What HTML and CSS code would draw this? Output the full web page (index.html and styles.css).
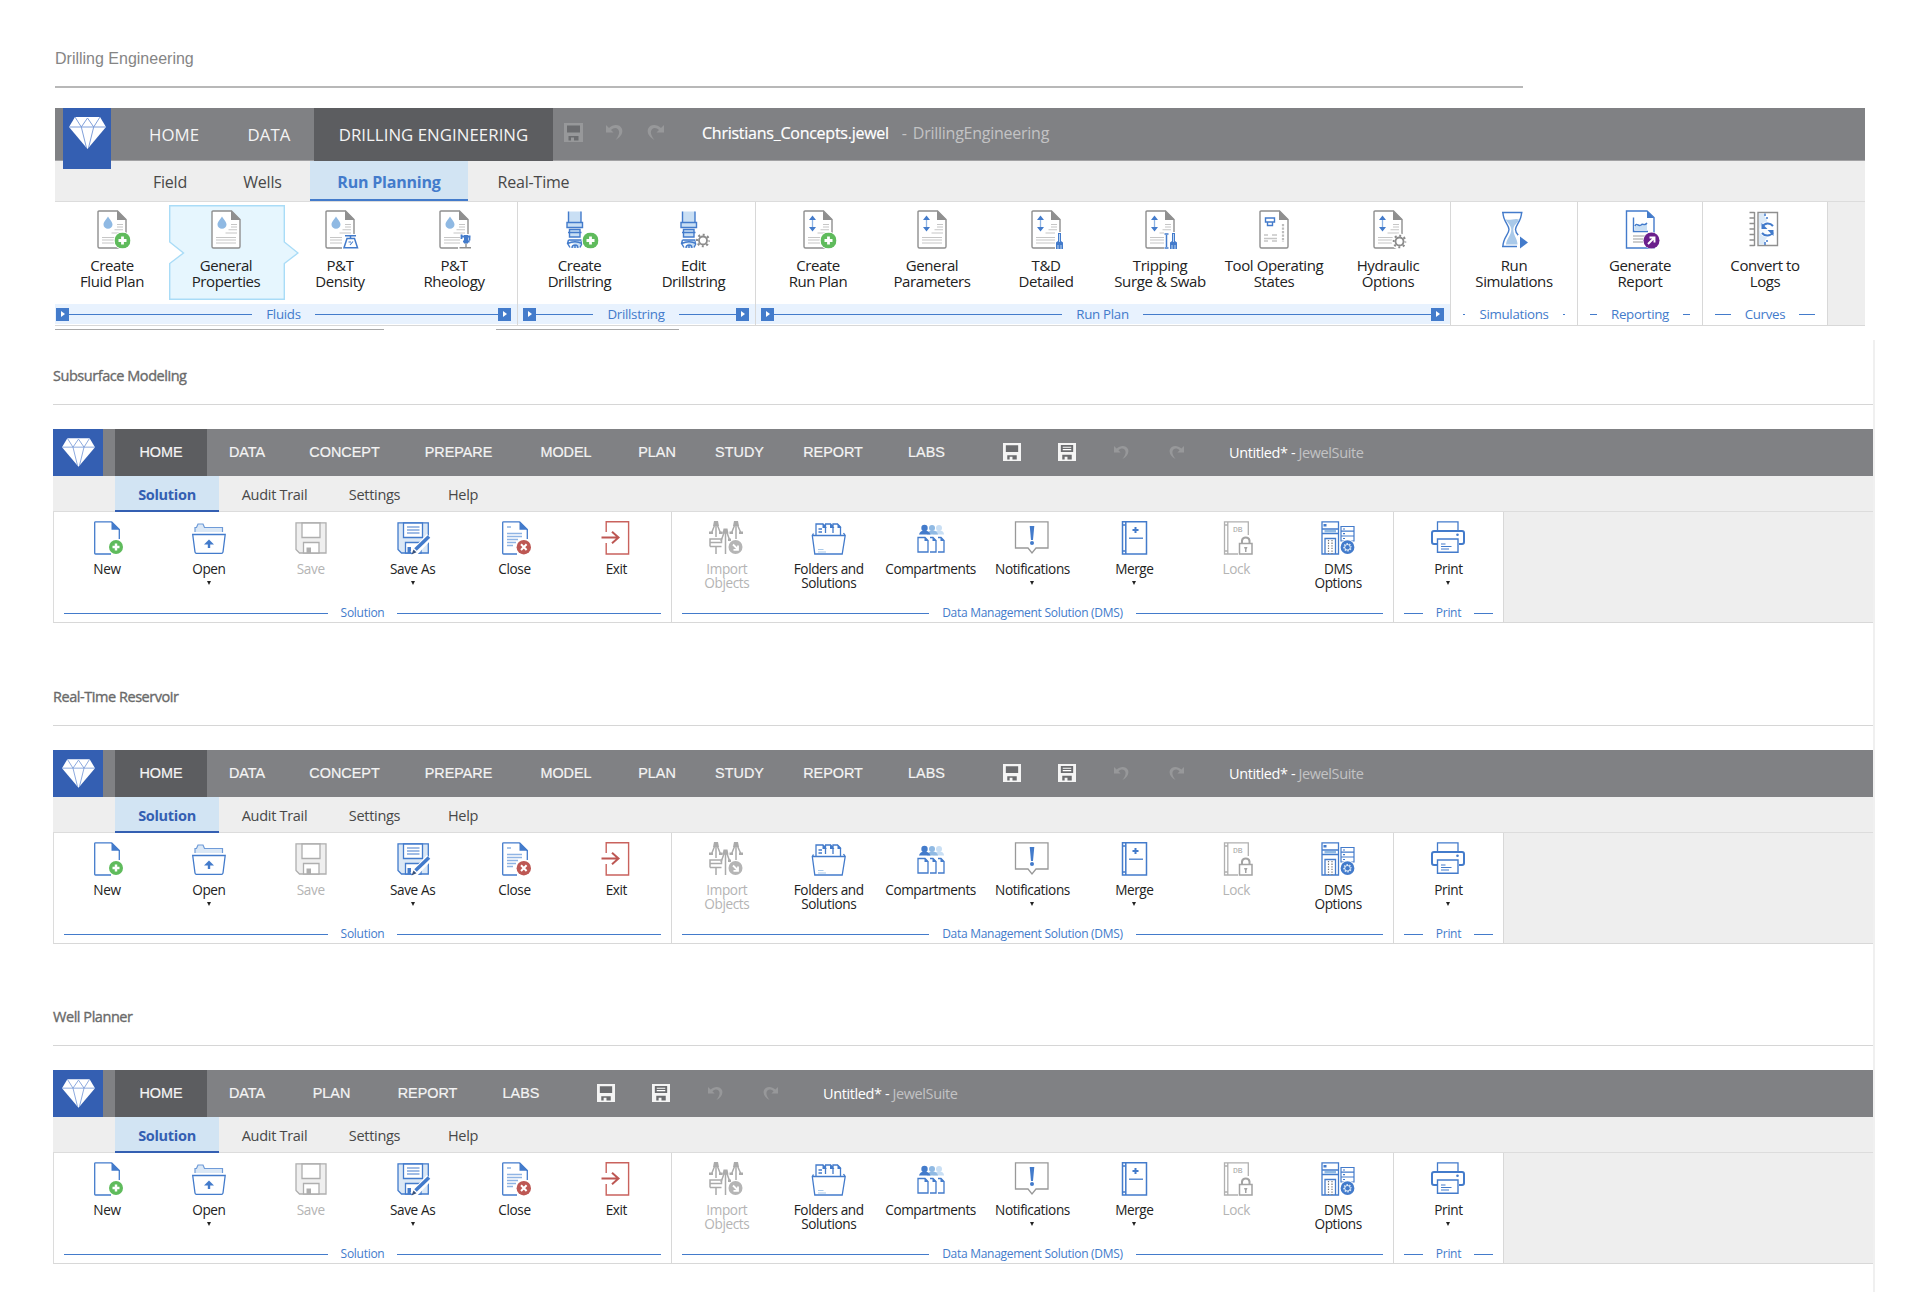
FILE: index.html
```
<!DOCTYPE html>
<html lang="en">
<head>
    <meta charset="UTF-8">
    <title>JewelSuite Ribbons</title>
    <link rel="stylesheet" href="styles.css">
</head>
<body>

    <!-- Icon sprite -->
    <svg class="sprite" aria-hidden="true">
        <symbol id="diamond" viewBox="0 0 37 32">
            <path d="M6 0H31L37 10L18.5 32L0 10Z" fill="#fff"/>
            <path d="M0 10H37M6 0L12.3 10L18.5 1L24.7 10L31 0M12.3 10L17.5 31M24.7 10L19.5 31" fill="none" stroke="#7f9fda" stroke-width="1"/>
        </symbol>
        <symbol id="plus" viewBox="0 0 16 16">
            <circle cx="8" cy="8" r="8" fill="#5fbb5c"/>
            <path d="M8 4V12M4 8H12" stroke="#fff" stroke-width="2.8"/>
        </symbol>
        <symbol id="gear" viewBox="0 0 14 14">
            <circle cx="7" cy="7" r="4" fill="#fff" stroke="#8c8c8c" stroke-width="1.8"/>
            <circle cx="7" cy="7" r="5.9" fill="none" stroke="#8c8c8c" stroke-width="2.2" stroke-dasharray="2 2.63" stroke-dashoffset="1"/>
        </symbol>

        <!-- quick access -->
        <symbol id="q-save" viewBox="0 0 19 19">
            <path d="M0 0H19V19H0Z" fill="currentColor"/>
            <path class="hole" d="M3 2.5H16V9.5H3ZM4.5 13H14.5V17.5H10V14.5H7V17.5H4.5Z"/>
        </symbol>
        <symbol id="q-saveall" viewBox="0 0 19 19">
            <path d="M0 0H19V19H0Z" fill="currentColor"/>
            <path class="hole" d="M3 2H16V9.5H3ZM4.5 12.5H14.5V17.5H10V14.5H7V17.5H4.5Z"/>
            <path d="M5 4.5H14M5 7H14" stroke="#fff" stroke-width="1.2"/>
        </symbol>
        <symbol id="q-undo" viewBox="0 0 17 17">
            <path d="M0 1V8.5H7.5L5 6C7 4 10 3.2 12 5.2C14.3 7.7 13 11.5 9.5 16C15 13 17.5 8.5 15.8 4.5C13.7 0 7 0 3 4Z" fill="currentColor"/>
        </symbol>
        <symbol id="q-redo" viewBox="0 0 17 17">
            <path d="M17 1V8.5H9.5L12 6C10 4 7 3.2 5 5.2C2.7 7.7 4 11.5 7.5 16C2 13 -.5 8.5 1.2 4.5C3.3 0 10 0 14 4Z" fill="currentColor"/>
        </symbol>

        <!-- drilling engineering -->
        <symbol id="page" viewBox="0 0 44 39">
            <path d="M9 1H27.5L36 9.5V36.5Q36 38 34.5 38H9.5Q8 38 8 36.5V2Q8 1 9 1Z" fill="#fff" stroke="#8f8f8f" stroke-width="1.4"/>
            <path d="M27 .5L36.5 10H27Z" fill="#8f8f8f"/>
        </symbol>
        <symbol id="page-lines" viewBox="0 0 44 39">
            <path d="M27 14.5H33M27 17H33M24.5 19.7H33M21.5 23H33M12 27.5H32M12 30H32M12 33H32" stroke="#c6c6c6" stroke-width="1.1"/>
        </symbol>
        <symbol id="page-fluid" viewBox="0 0 44 39">
            <use href="#page"/><use href="#page-lines"/>
            <path d="M18 6.5C19.5 9.5 22.5 11.5 22.5 14.5A4.5 4.3 0 0 1 13.5 14.5C13.5 11.5 16.5 9.5 18 6.5Z" fill="#8fb9e3"/>
        </symbol>
        <symbol id="page-range" viewBox="0 0 44 39">
            <use href="#page"/><use href="#page-lines"/>
            <path d="M16.5 9V18" stroke="#8fb4e4" stroke-width="1.3"/>
            <path d="M16.5 5.5L20 10H13ZM16.5 21.5L20 17H13Z" fill="#437bcb"/>
        </symbol>
        <symbol id="d-fluidplan" viewBox="0 0 44 39">
            <use href="#page-fluid"/>
            <circle cx="32.5" cy="30.5" r="9" fill="#fff"/>
            <use href="#plus" x="24.5" y="22.5" width="16" height="16"/>
        </symbol>
        <symbol id="d-density" viewBox="0 0 44 39">
            <use href="#page-fluid"/>
            <path d="M24 24H43V39H24Z" fill="#fff"/>
            <path d="M27 25.7H38M32.5 26V28M29 28.5H36.5L39.5 37.7H26Z" fill="none" stroke="#437bcb" stroke-width="1.5"/>
            <path d="M30.5 32H33M32 35L35 31.5" stroke="#437bcb" stroke-width="1.1"/>
        </symbol>
        <symbol id="d-rheology" viewBox="0 0 44 39">
            <use href="#page-fluid"/>
            <path d="M28 24H43V39H26V34H28Z" fill="#fff"/>
            <path d="M29.5 24.5V29M29 26.5H38.5M37.5 27V30.5M31 31.5H37.5" fill="none" stroke="#437bcb" stroke-width="1.8"/>
            <path d="M34 25V33.5" stroke="#437bcb" stroke-width="4"/>
            <path d="M27.500 37.700H39M34 33.500V37.500" stroke="#8f8f8f" stroke-width="1.4"/>
        </symbol>
        <symbol id="drill" viewBox="0 0 44 39">
            <g fill="#c9dff4" stroke="#437bcb" stroke-width="1.4">
                <path d="M10.5 1.500V13H23V1.500" />
                <path d="M9 12.500H24.500V17.500H9Z"/>
                <path d="M11.500 19.500H22V27H11.500ZM10 22.500H23.500"/>
                <path d="M10.500 30H23L24 33.500L22 37.500M10.500 30L9.500 33.500L12 37.500M9.500 33.500C14 31.500 20 31.500 24 33.500M14 38C14 34 20 34 20 38M17 35V38"/>
            </g>
        </symbol>
        <symbol id="d-createstring" viewBox="0 0 44 39">
            <use href="#drill"/>
            <circle cx="32.5" cy="30.5" r="9" fill="#fff"/>
            <use href="#plus" x="24.5" y="22.5" width="16" height="16"/>
        </symbol>
        <symbol id="d-editstring" viewBox="0 0 44 39">
            <use href="#drill"/>
            <circle cx="31" cy="30.5" r="7.5" fill="#fff"/>
            <use href="#gear" x="24" y="23.5" width="14" height="14"/>
        </symbol>
        <symbol id="d-runplan" viewBox="0 0 44 39">
            <use href="#page-range"/>
            <circle cx="32.5" cy="30.5" r="9" fill="#fff"/>
            <use href="#plus" x="24.5" y="22.5" width="16" height="16"/>
        </symbol>
        <symbol id="bit" viewBox="0 0 8 16">
            <path d="M2.5 0H5.5V8L7.5 9.500V16H.5V9.500L2.5 8Z" fill="#437bcb"/>
            <path d="M4 1V9M2.5 12V16M5.5 12V16" stroke="#c9dff4" stroke-width=".9"/>
        </symbol>
        <symbol id="d-td" viewBox="0 0 44 39">
            <use href="#page-range"/>
            <path d="M31 22H42V39H31Z" fill="#fff"/>
            <use href="#bit" x="31.5" y="23" width="8" height="16"/>
        </symbol>
        <symbol id="d-tripping" viewBox="0 0 44 39">
            <use href="#page-range"/>
            <path d="M26 22H42V39H26Z" fill="#fff"/>
            <path d="M28.5 25V37M26.5 24H30.5M26.5 38H30.5" stroke="#437bcb" stroke-width="1.5"/>
            <use href="#bit" x="31.5" y="23" width="8" height="16"/>
        </symbol>
        <symbol id="d-tool" viewBox="0 0 44 39">
            <use href="#page"/>
            <path d="M13.5 8H22.5V12H20.5V15.5H15.5V12H13.5ZM15.5 12H20.5" fill="#fff" stroke="#437bcb" stroke-width="1.4"/>
            <path d="M31 14V32" stroke="#bdbdbd" stroke-width="2.2" stroke-dasharray="2.2 1.3"/>
            <path d="M12 25H16M20 25H25M12 28.5H25M12 31H16M20 31H25" stroke="#c6c6c6" stroke-width="1.4"/>
        </symbol>
        <symbol id="d-hydraulic" viewBox="0 0 44 39">
            <use href="#page-range"/>
            <circle cx="33.5" cy="31.5" r="8" fill="#fff"/>
            <use href="#gear" x="26.5" y="24.5" width="14" height="14"/>
        </symbol>
        <symbol id="d-simulate" viewBox="0 0 44 39">
            <path d="M10 2.5H30.5M10 36.5H25" stroke="#437bcb" stroke-width="1.6"/>
            <path d="M11 3C11 11 17 15 17 19.5C17 24 11 28 11 36M29.5 3C29.5 11 23.500 15 23.500 19.5C23.500 22 24.500 23.500 26.500 25.500" fill="#fff" stroke="#437bcb" stroke-width="1.4"/>
            <path d="M13.500 9C17 11.500 23 7.500 27 9.500C26 13 21.300 15 21.300 19.500C21.300 25 25.500 29 25.500 34.500H14C14.500 29 19.300 25 19.300 19.500C19.300 15 14.500 12 13.500 9Z" fill="#a9c9e9"/>
            <path d="M26 24.5L37 32.5L27 39H26Z" fill="#fff"/>
            <path d="M28 26.5L36 32.5L28 38.5Z" fill="#437bcb"/>
        </symbol>
        <symbol id="d-report" viewBox="0 0 44 39">
            <path d="M8.5 1H29L36 7.5V38H8.5Z" fill="#fff" stroke="#437bcb" stroke-width="1.4"/>
            <path d="M29 1V8H36Z" fill="#437bcb"/>
            <path d="M17 16L20 14L22 15.5L26 14L29 12.5V20H17Z" fill="#c9dff4"/>
            <path d="M15.5 7.5V21.5H30M17 16C19 12 20 17 23 15C25 12.5 26 17 29 13" fill="none" stroke="#437bcb" stroke-width="1.4"/>
            <path d="M15 26H27M15 29H27M15 32H27" stroke="#9b9b9b" stroke-width="1.2"/>
            <circle cx="33.5" cy="30.5" r="8.5" fill="#fff"/>
            <circle cx="33.5" cy="30.5" r="8" fill="#6b1f8c"/>
            <path d="M30 34L36 28M31.5 27.5H36.5V32.5" fill="none" stroke="#fff" stroke-width="1.9"/>
        </symbol>
        <symbol id="d-convert" viewBox="0 0 44 39">
            <path d="M11.5 2V36M6.5 2.5H11.5M6.5 8H11.5M6.5 13.5H11.5M6.5 19H11.5M6.5 24.5H11.5M6.5 30H11.5M6.5 35.5H11.5" stroke="#8f8f8f" stroke-width="1.4"/>
            <path d="M15 2.5H34.5V35.5H15Z" fill="#fff" stroke="#8f8f8f" stroke-width="1.4"/>
            <path d="M16 3.5H21Q22 8 24 10V28Q21 30 22 34.5H16Z" fill="#dbe9f7"/>
            <circle cx="24.5" cy="19.5" r="8" fill="#fff" opacity=".8"/>
            <path d="M22 3.5V6M24 7V9M24 30V32M22 32V35" stroke="#437bcb" stroke-width="1.5"/>
            <path d="M30 16C27 12.5 22 12.5 19.5 16.5M19 23C22 26.5 27 26.5 30 22.5" fill="none" stroke="#437bcb" stroke-width="2"/>
            <path d="M18.5 13V19H24.5ZM30.5 26V20H24.5Z" fill="#437bcb"/>
        </symbol>

        <!-- home ribbon -->
        <symbol id="s-new" viewBox="0 0 36 34">
            <path d="M22.5 .8H6.5Q5.7 .8 5.7 1.6V32.2Q5.7 33 6.5 33H22M30.3 18V8.5L22.5 .8" fill="none" stroke="#437bcb" stroke-width="1.3"/>
            <path d="M22.5 .5L31 8.8H22.5Z" fill="#437bcb"/>
            <use href="#plus" x="20" y="19" width="14" height="14"/>
        </symbol>
        <symbol id="s-open" viewBox="0 0 36 34">
            <path d="M4 11V6.5H5.5L7 3H12L13.5 6.5H31.5V11" fill="#dbe8f6" stroke="#6f9bd8" stroke-width="1.2"/>
            <path d="M1.7 13.5H34.2L32 31Q31.8 32.3 30.5 32.3H5.5Q4.2 32.3 4 31Z" fill="#fff" stroke="#437bcb" stroke-width="1.3"/>
            <path d="M18 27V21" stroke="#437bcb" stroke-width="2.4"/>
            <path d="M18 18.5L23 23.5H13Z" fill="#437bcb"/>
        </symbol>
        <symbol id="s-save" viewBox="0 0 36 34">
            <path d="M3 1.8H33V32H6.5L3 28.5Z" fill="#efefef" stroke="#aeaeae" stroke-width="1.3"/>
            <path d="M9 2H27V16.5H9ZM10.5 32V21.5H26V32Z" fill="#fff" stroke="#aeaeae" stroke-width="1.3"/>
            <path d="M13.5 26.5H18V32H13.5Z" fill="#aeaeae"/>
        </symbol>
        <symbol id="s-saveas" viewBox="0 0 36 34">
            <path d="M3 1.8H33.3V32H6.5L3 28.5Z" fill="#dbe8f6" stroke="#437bcb" stroke-width="1.3"/>
            <path d="M8.5 2H27.5V16.5H8.5ZM10.5 32V21.5H26V32Z" fill="#fff" stroke="#437bcb" stroke-width="1.3"/>
            <path d="M12 6H24.5M12 9H24.5M12 12H24.5" stroke="#437bcb" stroke-width="1.2"/>
            <path d="M12.5 26H16V32H12.5Z" fill="#437bcb"/>
            <path d="M18 33L34.5 15.5" stroke="#fff" stroke-width="7"/>
            <path d="M20.5 28.5L34 15.5" stroke="#437bcb" stroke-width="3.6"/>
            <path d="M16.5 33.5L18.5 28.5L21.5 31.3Z" fill="#36517d"/>
        </symbol>
        <symbol id="s-close" viewBox="0 0 36 34">
            <path d="M22.5 .8H6.5Q5.7 .8 5.7 1.6V32.2Q5.7 33 6.5 33H20M30.3 18V8.5L22.5 .8" fill="none" stroke="#437bcb" stroke-width="1.3"/>
            <path d="M22.5 .5L31 8.8H22.5Z" fill="#437bcb"/>
            <path d="M10 6H14M10 12.5H25M10 15.5H25M10 18.5H21M10 21.5H19M10 24.5H16" stroke="#8fb4e4" stroke-width="1.3"/>
            <circle cx="26.8" cy="26.2" r="7.2" fill="#bd5753"/>
            <path d="M24 23.3L29.6 29M29.6 23.3L24 29" stroke="#fff" stroke-width="2"/>
        </symbol>
        <symbol id="s-exit" viewBox="0 0 36 34">
            <path d="M8.2 11V.8H30.6V33H8.2V22" fill="none" stroke="#c9625d" stroke-width="1.4"/>
            <path d="M3.5 16.5H20M14 10.8L20.5 16.5L14 22.2" fill="none" stroke="#bd5753" stroke-width="2"/>
        </symbol>
        <symbol id="s-import" viewBox="0 0 36 34">
            <g fill="none" stroke="#ababab" stroke-width="1.5">
                <path d="M6.5 2L2.5 12M7.500 2L11.500 12M7 4V16M26.500 2L22.500 12M27.500 2L32 12M27 4V18M16 9L12 20M17 9L21 20M16.500 12V33"/>
                <path d="M1 18H12.500V21.500H1ZM1 25.500H12.500M7 25V33M1 21.500V25.500"/>
            </g>
            <path d="M5 0H9L10 5H4ZM25 0H29L30 5H24ZM14.500 7.500H18.500L19.500 12.500H13.500ZM0 10.500H4V13H0ZM10 10.500H13.500V13H10ZM20.500 10.500H24V13H20.500ZM30 10.500H34V13H30ZM19 17.500H22V20H19Z" fill="#ababab"/>
            <circle cx="26.500" cy="26" r="7.800" fill="#fff"/>
            <circle cx="26.500" cy="26" r="7" fill="#b5b5b5"/>
            <path d="M24 23.500L28.500 28M29 24.500V28.800H24.500" fill="none" stroke="#fff" stroke-width="1.800"/>
        </symbol>
        <symbol id="s-folders" viewBox="0 0 36 34">
            <path d="M5 14V3H12L14.500 5.500V3M14 3H19.500L22 5.500V3H26.500L29.500 6V14M14.500 5V12M22 5V12M7.500 8H11M7.500 11H11" fill="none" stroke="#437bcb" stroke-width="1.300"/>
            <path d="M11.500 2.500L16 7H11.500ZM19 2.500L23.500 7H19ZM26.500 2.500L30.500 7H26.500Z" fill="#437bcb"/>
            <path d="M2.500 12.500L1.300 14.500L3.800 33H31.200L34.200 14.500L32.500 12M1.500 14.500H34" fill="none" stroke="#437bcb" stroke-width="1.300"/>
            <path d="M7 28.500H12.500M7 31H15" stroke="#a9c9e9" stroke-width="1.200"/>
        </symbol>
        <symbol id="s-compart" viewBox="0 0 36 34">
            <g fill="#c9dff4"><circle cx="26" cy="7" r="3"/><path d="M20 13.500Q21 9.500 26 9.500T31 13.500Z"/></g>
            <g fill="#8fb9e3"><circle cx="19" cy="7" r="3"/><path d="M14 13.500Q15 9.500 19.500 9.500T25 13.500Z"/></g>
            <g fill="#437bcb"><circle cx="11.500" cy="7" r="3.200"/><path d="M6 13.500Q7 9.500 11.500 9.500T17.500 13.500Z"/></g>
            <path d="M5 16.500H12L15 19.500V31H5ZM17 16.500H20L23 19.500V31H17M25 16.500H28L31 19.500V31H25" fill="none" stroke="#437bcb" stroke-width="1.300"/>
            <path d="M11.500 16L15.500 20H11.500ZM19.500 16L23.500 20H19.500ZM27.500 16L31.500 20H27.500Z" fill="#437bcb"/>
        </symbol>
        <symbol id="s-notify" viewBox="0 0 36 34">
            <path d="M1.500 .8H34V27H22L18 32L14 27H1.500Z" fill="#fff" stroke="#999" stroke-width="1.300"/>
            <path d="M15.700 5H20.300L19 19H17Z" fill="#437bcb"/>
            <circle cx="18" cy="22" r="2" fill="#437bcb"/>
        </symbol>
        <symbol id="s-merge" viewBox="0 0 36 34">
            <path d="M6.500 .8H30.500V33H6.500ZM9.800 1V33" fill="none" stroke="#437bcb" stroke-width="1.500"/>
            <path d="M6.500 4H9.500M6.500 30H9.500" stroke="#437bcb" stroke-width="1.600"/>
            <path d="M19.500 6V12M16.500 9H22.500" stroke="#437bcb" stroke-width="2"/>
            <path d="M13 17.200H27" stroke="#437bcb" stroke-width="1.300"/>
        </symbol>
        <symbol id="s-lock" viewBox="0 0 36 34">
            <path d="M30.300 14V.8H6.500V33H20M9.800 1V33M6.500 4H9.500M6.500 30H9.500" fill="none" stroke="#b0b0b0" stroke-width="1.300"/>
            <text x="15" y="10.500" class="db-text">DB</text>
            <path d="M21.500 22.500H34V33H21.500Z" fill="#fff" stroke="#a3a3a3" stroke-width="1.500"/>
            <path d="M24 22.500V19.500A3.800 3.500 0 0 1 31.500 19.500V22.500" fill="none" stroke="#a3a3a3" stroke-width="2"/>
            <path d="M26 26H29.500L28.500 28.500V31H27V28.500Z" fill="#a3a3a3"/>
        </symbol>
        <symbol id="s-dms" viewBox="0 0 36 34">
            <path d="M2 .8H18.500V33H2ZM2 8H18.500M2 12.500H18.500M5 33V17.500H15.500V33" fill="none" stroke="#437bcb" stroke-width="1.300"/>
            <path d="M4.500 10.200H16" stroke="#8fb9e3" stroke-width="2.400"/>
            <path d="M3.500 3H6.500V5.500H3.500Z" fill="#437bcb"/>
            <path d="M8.500 19V33M12 19V33" stroke="#777" stroke-width="1.200" stroke-dasharray="1.300 1.300"/>
            <path d="M21 5.500H34V20H21ZM21 10.200H34M21 15H34" fill="none" stroke="#437bcb" stroke-width="1.200"/>
            <path d="M23 8H25M23 12.700H25M23 17.500H25" stroke="#437bcb" stroke-width="1.200"/>
            <circle cx="27.500" cy="26.200" r="7.800" fill="#fff"/>
            <circle cx="27.500" cy="26.200" r="5.600" fill="#dbe8f6" stroke="#437bcb" stroke-width="2.600"/>
            <circle cx="27.500" cy="26.200" r="4" fill="none" stroke="#437bcb" stroke-width="1.600" stroke-dasharray="1.500 1.640"/>
            <circle cx="27.500" cy="26.200" r="2.200" fill="#437bcb"/>
        </symbol>
        <symbol id="s-print" viewBox="0 0 36 34">
            <path d="M7.500 9V.8H28V9" fill="none" stroke="#437bcb" stroke-width="1.300"/>
            <path d="M7 23H4Q2 23 2 21V12Q2 10 4 10H32Q34 10 34 12V21Q34 23 32 23H29" fill="none" stroke="#437bcb" stroke-width="2"/>
            <path d="M7.500 18H28V31.200H7.500Z" fill="#fff" stroke="#437bcb" stroke-width="1.400"/>
            <path d="M11 23H15.500M11 25.500H21.500M11 28H19" stroke="#437bcb" stroke-width="1.200"/>
            <circle cx="27.500" cy="13.800" r="1.300" fill="#437bcb"/>
        </symbol>
    </svg>

    <section class="drilling">
        <h2>Drilling Engineering</h2>
        <header class="bar">
            <div class="logo"><svg width="37" height="32"><use href="#diamond"/></svg></div>
            <nav class="tabs">
                <a>HOME</a><a>DATA</a><a class="active">DRILLING ENGINEERING</a>
            </nav>
            <div class="quick">
                <svg class="dim" width="19" height="19"><use href="#q-save"/></svg>
                <svg class="dim" width="17" height="17"><use href="#q-undo"/></svg>
                <svg class="dim" width="17" height="17"><use href="#q-redo"/></svg>
            </div>
            <div class="title"><b>Christians_Concepts.jewel</b><span class="dash">-</span><span>DrillingEngineering</span></div>
        </header>
        <nav class="subtabs">
            <a>Field</a><a>Wells</a><a class="active">Run Planning</a><a>Real-Time</a>
        </nav>
        <div class="ribbon">
            <div class="group strip fluids">
                <div class="buttons">
                    <div class="btn"><svg><use href="#d-fluidplan"/></svg>Create<br>Fluid Plan</div>
                    <div class="btn selected">
                        <svg class="arrow-box" viewBox="0 0 130 95"><path d="M.7 .7H115.3V37L129 48L115.3 58.5V94.3H.7V58.5L14.5 48L.7 37Z"/></svg>
                        <svg><use href="#page-fluid"/></svg>General<br>Properties
                    </div>
                    <div class="btn"><svg><use href="#d-density"/></svg>P&amp;T<br>Density</div>
                    <div class="btn"><svg><use href="#d-rheology"/></svg>P&amp;T<br>Rheology</div>
                </div>
                <div class="caption"><i></i><span>Fluids</span><i></i></div>
            </div>
            <div class="group strip drillstring">
                <div class="buttons">
                    <div class="btn"><svg><use href="#d-createstring"/></svg>Create<br>Drillstring</div>
                    <div class="btn"><svg><use href="#d-editstring"/></svg>Edit<br>Drillstring</div>
                </div>
                <div class="caption"><i></i><span>Drillstring</span><i></i></div>
            </div>
            <div class="group strip runplan">
                <div class="buttons">
                    <div class="btn"><svg><use href="#d-runplan"/></svg>Create<br>Run Plan</div>
                    <div class="btn"><svg><use href="#page-range"/></svg>General<br>Parameters</div>
                    <div class="btn"><svg><use href="#d-td"/></svg>T&amp;D<br>Detailed</div>
                    <div class="btn"><svg><use href="#d-tripping"/></svg>Tripping<br>Surge &amp; Swab</div>
                    <div class="btn"><svg><use href="#d-tool"/></svg>Tool Operating<br>States</div>
                    <div class="btn"><svg><use href="#d-hydraulic"/></svg>Hydraulic<br>Options</div>
                </div>
                <div class="caption"><i></i><span>Run Plan</span><i></i></div>
            </div>
            <div class="group simulations">
                <div class="buttons"><div class="btn"><svg><use href="#d-simulate"/></svg>Run<br>Simulations</div></div>
                <div class="caption"><span>Simulations</span></div>
            </div>
            <div class="group reporting">
                <div class="buttons"><div class="btn"><svg><use href="#d-report"/></svg>Generate<br>Report</div></div>
                <div class="caption"><span>Reporting</span></div>
            </div>
            <div class="group curves">
                <div class="buttons"><div class="btn"><svg><use href="#d-convert"/></svg>Convert to<br>Logs</div></div>
                <div class="caption"><span>Curves</span></div>
            </div>
        </div>
        <div class="edges"><i></i><i></i></div>
    </section>

    <main class="suites">
        <section class="suite">
            <h2>Subsurface Modeling</h2>
            <header class="bar">
                <div class="logo"><svg width="33" height="29"><use href="#diamond"/></svg></div>
                <nav class="tabs">
                    <a class="active">HOME</a><a>DATA</a><a>CONCEPT</a><a>PREPARE</a><a>MODEL</a><a>PLAN</a><a>STUDY</a><a>REPORT</a><a>LABS</a>
                </nav>
            </header>
        </section>
        <section class="suite">
            <h2>Real-Time Reservoir</h2>
            <header class="bar">
                <div class="logo"><svg width="33" height="29"><use href="#diamond"/></svg></div>
                <nav class="tabs">
                    <a class="active">HOME</a><a>DATA</a><a>CONCEPT</a><a>PREPARE</a><a>MODEL</a><a>PLAN</a><a>STUDY</a><a>REPORT</a><a>LABS</a>
                </nav>
            </header>
        </section>
        <section class="suite">
            <h2>Well Planner</h2>
            <header class="bar">
                <div class="logo"><svg width="33" height="29"><use href="#diamond"/></svg></div>
                <nav class="tabs short">
                    <a class="active">HOME</a><a>DATA</a><a>PLAN</a><a>REPORT</a><a>LABS</a>
                </nav>
            </header>
        </section>
    </main>

    <template id="quick-tools">
        <div class="quick">
            <svg width="18" height="18"><use href="#q-save"/></svg>
            <svg width="18" height="18"><use href="#q-saveall"/></svg>
            <svg class="dim" width="15" height="15"><use href="#q-undo"/></svg>
            <svg class="dim" width="15" height="15"><use href="#q-redo"/></svg>
        </div>
        <div class="title"><b>Untitled* - </b><span>JewelSuite</span></div>
    </template>

    <template id="home-ribbon">
        <nav class="subtabs">
            <a class="active">Solution</a><a>Audit Trail</a><a>Settings</a><a>Help</a>
        </nav>
        <div class="ribbon">
            <div class="group solution">
                <div class="buttons">
                    <div class="btn"><svg><use href="#s-new"/></svg>New</div>
                    <div class="btn more"><svg><use href="#s-open"/></svg>Open</div>
                    <div class="btn off"><svg><use href="#s-save"/></svg>Save</div>
                    <div class="btn more"><svg><use href="#s-saveas"/></svg>Save As</div>
                    <div class="btn"><svg><use href="#s-close"/></svg>Close</div>
                    <div class="btn"><svg><use href="#s-exit"/></svg>Exit</div>
                </div>
                <div class="caption"><span>Solution</span></div>
            </div>
            <div class="group dms">
                <div class="buttons">
                    <div class="btn off"><svg><use href="#s-import"/></svg>Import<br>Objects</div>
                    <div class="btn"><svg><use href="#s-folders"/></svg>Folders and<br>Solutions</div>
                    <div class="btn"><svg><use href="#s-compart"/></svg>Compartments</div>
                    <div class="btn more"><svg><use href="#s-notify"/></svg>Notifications</div>
                    <div class="btn more"><svg><use href="#s-merge"/></svg>Merge</div>
                    <div class="btn off"><svg><use href="#s-lock"/></svg>Lock</div>
                    <div class="btn"><svg><use href="#s-dms"/></svg>DMS<br>Options</div>
                </div>
                <div class="caption"><span>Data Management Solution (DMS)</span></div>
            </div>
            <div class="group print">
                <div class="buttons">
                    <div class="btn more"><svg><use href="#s-print"/></svg>Print</div>
                </div>
                <div class="caption"><span>Print</span></div>
            </div>
        </div>
    </template>

    <script>
        // every suite has the same quick tools and home ribbon
        const quickTools = document.getElementById("quick-tools");
        const homeRibbon = document.getElementById("home-ribbon");

        document.querySelectorAll(".suite").forEach(suite => {
            suite.querySelector(".bar").appendChild(quickTools.content.cloneNode(true));
            suite.appendChild(homeRibbon.content.cloneNode(true));
        });
    </script>

</body>
</html>
```
FILE: styles.css
```
* {
    box-sizing: border-box;
}

body {
    margin: 0;
    height: 1292px;
    overflow: hidden;
    background: #fff;
    font-family: "Open Sans", "Noto Sans", sans-serif;
    color: #222;
}

h2 {
    margin: 0;
    font-weight: 400;
}

svg {
    display: block;
    flex: none;
}

.sprite {
    display: none;
}

.hole {
    fill: #6b6c6f;
}

.db-text {
    font: 8px "Liberation Mono", monospace;
    letter-spacing: 0;
    fill: #a3a3a3;
}

/* Title bar */
.bar {
    display: flex;
    background: #808184;
    color: #f4f4f4;
}

.logo {
    display: flex;
    justify-content: center;
    background: #345fb2;
}

.tabs,
.subtabs {
    display: grid;
    white-space: nowrap;
    text-align: center;
}

.tabs .active {
    background: #5c5d60;
}

.quick {
    display: flex;
    align-items: center;
}

.quick .dim {
    color: #97989a;
}

.dim .hole {
    fill: #808184;
}

.title {
    white-space: pre;
    color: #c3c3c4;
}

.title b {
    font-weight: 400;
    color: #fff;
}

.subtabs {
    background: #eee;
    border-bottom: 1px solid #dcdcdc;
    color: #484848;
}

.subtabs .active {
    background: #d2e4f3;
    font-weight: 700;
}

/* Ribbon */
.ribbon {
    display: flex;
    background: #eee;
    border-bottom: 1px solid #d8d8d8;
}

.group {
    display: flex;
    flex-direction: column;
    justify-content: space-between;
    background: #fff;
    border-right: 1px solid #d8d8d8;
}

.buttons {
    display: flex;
    justify-content: center;
}

.btn {
    position: relative;
    z-index: 0;
    display: flex;
    flex-direction: column;
    align-items: center;
    text-align: center;
    white-space: nowrap;
}

.btn.off {
    color: #b4b4b4;
}

.btn.more::after {
    content: "";
    border: 2.5px solid transparent;
    border-top: 4px solid #222;
    border-bottom: 0;
    margin-top: 5px;
}

.caption {
    display: flex;
    align-items: center;
    color: #437bcb;
    white-space: nowrap;
}

.caption::before,
.caption::after {
    content: "";
    flex: 1;
    height: 1px;
    background: #437bcb;
}

/* Drilling Engineering */
.drilling {
    width: 1810px;
    height: 340px;
    margin-left: 55px;
}

.drilling h2 {
    width: 1468px;
    height: 88px;
    margin-bottom: 20px;
    padding-top: 49px;
    border-bottom: 2px solid #b8b8b8;
    font: 16px/20px "Liberation Sans", Arial, sans-serif;
    color: #858585;
}

.drilling .bar {
    height: 53px;
    padding-left: 8px;
    border-bottom: 1px solid #a2a2a4;
}

.drilling .logo {
    width: 48px;
    height: 61px;
    margin-right: 13px;
    padding-top: 9px;
    z-index: 1;
}

.drilling .tabs {
    grid-template-columns: 100px 90px 239px;
    font-size: 16.8px;
    line-height: 53px;
    letter-spacing: 0.05px;
}

.drilling .quick {
    display: grid;
    grid-template-columns: 41px 41px 41px;
    justify-items: center;
    height: 48px;
}

.drilling .title {
    margin-left: 26px;
    font-size: 16px;
    line-height: 50px;
    letter-spacing: -0.25px;
}

.drilling .title b {
    -webkit-text-stroke: 0.2px #fff;
}

.drilling .dash {
    margin: 0 6px 0 13px;
}

.drilling .subtabs {
    grid-template-columns: 90px 95px 158px 131px;
    height: 41px;
    padding-left: 70px;
    font-size: 16px;
    line-height: 43px;
    letter-spacing: -0.2px;
}

.drilling .subtabs .active {
    height: 40px;
    border-bottom: 2px solid #437bcb;
    color: #437bcb;
}

.drilling .ribbon {
    height: 124px;
}

.drilling .btn {
    width: 114px;
    padding-top: 8px;
    font-size: 15px;
    line-height: 16.3px;
    letter-spacing: -0.4px;
}

.drilling .btn > svg {
    width: 44px;
    height: 39px;
    margin-bottom: 8px;
}

/* selected step, an arrow pointing to the next one */
.drilling .btn .arrow-box {
    position: absolute;
    top: 3px;
    left: 0;
    z-index: -1;
    width: 130px;
    height: 95px;
    fill: #e6f6fe;
    stroke: #a9dcf7;
    stroke-width: 1.4px;
}

.fluids { width: 463px; }
.drillstring { width: 238px; }
.runplan { width: 695px; }
.simulations { width: 127px; }
.reporting { width: 125px; }
.curves { width: 125px; }

.fluids .buttons {
    justify-content: flex-start;
}

.drilling .caption {
    height: 20px;
    margin-bottom: 1px;
    padding: 0 12px;
    font-size: 13.3px;
    line-height: 20px;
    letter-spacing: -0.3px;
}

.drilling .caption span {
    padding: 0 14px;
}

.drilling .strip .caption {
    padding: 0 6px 0 1px;
    background: #e8f2fe;
}

.drilling .drillstring .caption,
.drilling .runplan .caption {
    padding-left: 5px;
}

.caption i {
    width: 13px;
    height: 13px;
    background: #437bcb;
}

.caption i::before {
    content: "";
    display: block;
    width: 0;
    margin: 3px 0 0 5px;
    border: 3.5px solid transparent;
    border-left: 4px solid #fff;
    border-right: 0;
}

.caption i:first-child { order: -1; }
.caption i:last-of-type { order: 1; }

.edges {
    display: flex;
    gap: 112px;
    padding-top: 3px;
}

.edges i {
    width: 329px;
    height: 1px;
    background: #a8a8a8;
}

.edges i + i {
    width: 183px;
}

/* Suites */
.suites {
    width: 1822px;
    height: 952px;
    margin-left: 53px;
    border-right: 2px solid #f0f0f0;
}

.suite {
    height: 320px;
}

.suite:first-child {
    height: 321px;
}

.suite h2 {
    height: 65px;
    margin-bottom: 24px;
    padding-top: 22px;
    border-bottom: 1px solid #d6d6d6;
    font-size: 14.5px;
    line-height: 28px;
    letter-spacing: -0.45px;
    color: #6a6a6a;
    -webkit-text-stroke: 0.35px #6a6a6a;
}

.suite .bar {
    height: 47px;
}

.suite .logo {
    width: 50px;
    margin-right: 12px;
    padding-top: 9px;
}

.suite .tabs {
    grid-template-columns: 92px 80px 115px 113px 102px 80px 85px 102px 85px;
    font: 14.4px/47px "Liberation Sans", Arial, sans-serif;
    -webkit-text-stroke: 0.2px #f4f4f4;
}

.suite .tabs.short {
    grid-template-columns: 92px 80px 89px 103px 84px;
}

.suite .quick {
    display: grid;
    grid-template-columns: repeat(4, 55px);
    justify-items: center;
    margin-left: 15px;
    padding-bottom: 1px;
}

.suite .title {
    margin-left: 25px;
    font-size: 14.5px;
    line-height: 47px;
    letter-spacing: -0.4px;
}

.suite .subtabs {
    grid-template-columns: 104px 111px 89px 88px;
    height: 36px;
    padding-left: 62px;
    font-size: 14.5px;
    line-height: 38px;
    letter-spacing: -0.3px;
}

.suite .subtabs .active {
    height: 36px;
    border-bottom: 2px solid #345fb2;
    color: #345fb2;
}

.suite .ribbon {
    height: 111px;
    border-left: 1px solid #dcdcdc;
}

.suite .btn {
    width: 101.9px;
    padding-top: 9px;
    font-size: 13.6px;
    line-height: 14.3px;
    letter-spacing: -0.4px;
}

.suite .btn > svg {
    width: 36px;
    height: 34px;
    margin-bottom: 7px;
}

.solution { width: 618px; }
.dms { width: 722px; }
.print { width: 110px; }

.solution .buttons {
    justify-content: flex-start;
    padding-left: 2px;
}

.suite .caption {
    height: 18px;
    padding: 0 10px;
    font-size: 12px;
    line-height: 18px;
    letter-spacing: -0.28px;
}

.suite .caption span {
    padding: 0 13px;
}
```
